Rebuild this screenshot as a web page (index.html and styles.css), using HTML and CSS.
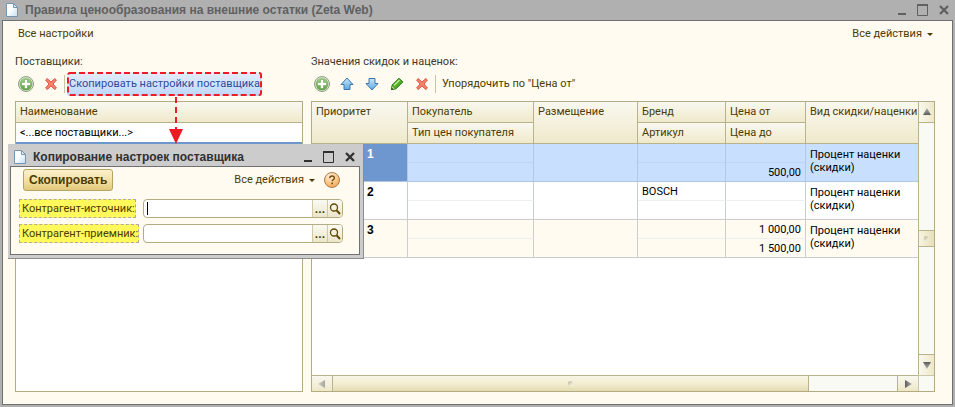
FILE: index.html
```html
<!DOCTYPE html>
<html lang="ru">
<head>
<meta charset="utf-8">
<title>Правила ценообразования на внешние остатки (Zeta Web)</title>
<link rel="stylesheet" href="styles.css">
</head>
<body>
<svg class="defs" aria-hidden="true">
  <defs>
    <linearGradient id="gGreen" x1="0" y1="0" x2="0" y2="1"><stop offset="0" stop-color="#a9cf96"/><stop offset="1" stop-color="#5da03f"/></linearGradient>
    <linearGradient id="gBlue" x1="0" y1="0" x2="0" y2="1"><stop offset="0" stop-color="#c5e6fb"/><stop offset="1" stop-color="#5fa9e0"/></linearGradient>
    <linearGradient id="gPage" x1="0" y1="0" x2="1" y2="1"><stop offset="0.4" stop-color="#ffffff"/><stop offset="1" stop-color="#c4def2"/></linearGradient>
    <radialGradient id="gHelp" cx="0.4" cy="0.25" r="0.8"><stop offset="0" stop-color="#fff1de"/><stop offset="0.55" stop-color="#fbc98c"/><stop offset="1" stop-color="#f2a04a"/></radialGradient>
    <linearGradient id="gGray" x1="0" y1="0" x2="1" y2="0"><stop offset="0" stop-color="#5c5c5c"/><stop offset="1" stop-color="#b4b4b4"/></linearGradient>
    <symbol id="page" viewBox="0 0 12 14"><path d="M.5.5h7l4 4v9H.5z" fill="url(#gPage)" stroke="#7195b3"/><path d="M7.5.5v4h4z" fill="#dcecf8" stroke="#7195b3" stroke-linejoin="round"/></symbol>
    <symbol id="add" viewBox="0 0 16 16"><circle cx="8" cy="8" r="7.5" fill="#dbe5d3" stroke="#8e9e84"/><circle cx="8" cy="8" r="6.3" fill="url(#gGreen)"/><path d="M6.5 3.5h3v3h3v3h-3v3h-3v-3h-3v-3h3z" fill="#fff" stroke="#5c9844" stroke-width=".5"/></symbol>
    <symbol id="del" viewBox="0 0 12 12"><path d="M2.2.6 6 4 9.800.6 11.400 2 8 6l3.400 4-1.600 1.500L6 8l-3.800 3.500L.6 10 4 6 .6 2z" fill="#f4826f" stroke="#dc5543" stroke-linejoin="round"/></symbol>
    <symbol id="up" viewBox="0 0 14 14"><path d="M7 1 13 7.500H10V12.500H4V7.500H1z" fill="url(#gBlue)" stroke="#3c77a6" stroke-linejoin="round"/></symbol>
    <symbol id="down" viewBox="0 0 14 14"><path d="M7 13 1 6.500H4V1.500H10V6.500H13z" fill="url(#gBlue)" stroke="#3c77a6" stroke-linejoin="round"/></symbol>
    <symbol id="pencil" viewBox="0 0 14 14"><path d="M1.500 12.500 2.200 8 9 1.200 12.800 5 6 11.800z" fill="#4fae24" stroke="#2a7412" stroke-linejoin="round"/><path d="m4 8.500 5.500-5.500" stroke="#c3ee9e" stroke-width="1.500"/><path d="M1.500 12.500 2.200 8.800 5.200 11.800z" fill="#f5eec8" stroke="#2f7d16" stroke-width=".6"/><path d="m1 13 .8-2.500 1.800 1.800z" fill="#1f4a10"/></symbol>
    <symbol id="min" viewBox="0 0 12 12"><path d="M2 9h8v2H2z" fill="currentColor"/></symbol>
    <symbol id="max" viewBox="0 0 12 12"><path d="M.5 1h10v10.500H.5z" fill="none" stroke="currentColor"/><path d="M0 0h11v2H0z" fill="currentColor"/></symbol>
    <symbol id="close" viewBox="0 0 12 12"><path d="m2 2 8 8M10 2l-8 8" stroke="currentColor" stroke-width="2.300"/></symbol>
    <symbol id="caret" viewBox="0 0 6 3"><path d="M0 0h6L3 3z" fill="#4d3b00"/></symbol>
    <symbol id="lens" viewBox="0 0 12 12"><circle cx="5" cy="4.500" r="3.500" fill="none" stroke="#5f4a00" stroke-width="1.300"/><path d="m7.500 7.200 3.500 3.800" stroke="#5f4a00" stroke-width="2"/></symbol>
    <symbol id="tri" viewBox="0 0 8 8"><path d="M1 0v8l7-4z" fill="url(#gGray)"/></symbol>
  </defs>
</svg>

<div class="window">
  <header class="titlebar">
    <svg class="page"><use href="#page"/></svg>
    <h1>Правила ценообразования на внешние остатки (Zeta Web)</h1>
    <div class="winbtns">
      <button aria-label="Свернуть"><svg><use href="#min"/></svg></button>
      <button aria-label="Развернуть"><svg><use href="#max"/></svg></button>
      <button aria-label="Закрыть"><svg><use href="#close"/></svg></button>
    </div>
  </header>

  <main class="client">
    <nav class="commands">
      <button class="link">Все настройки</button>
      <button class="link">Все действия <svg class="caret"><use href="#caret"/></svg></button>
    </nav>

    <div class="panes">
      <section class="suppliers">
        <h2>Поставщики:</h2>
        <div class="toolbar">
          <button class="tool" aria-label="Добавить"><svg class="i16"><use href="#add"/></svg></button>
          <button class="tool" aria-label="Удалить"><svg class="i12"><use href="#del"/></svg></button>
          <span class="sep"></span>
          <button class="copy">Скопировать настройки поставщика
            <svg class="frame"><rect x="1" y="1" rx="2"/></svg>
            <svg class="arrow" viewBox="0 0 14 48"><path d="M7 1v34" stroke="#ed1c24" stroke-width="2" stroke-dasharray="6 4"/><path d="M0 33h14L7 48z" fill="#ed1c24"/></svg>
          </button>
        </div>
        <div class="box">
          <table class="list">
            <thead><tr><th>Наименование</th></tr></thead>
            <tbody>
              <tr><td>&lt;...все поставщики...&gt;</td></tr>
              <tr class="current"><td></td></tr>
            </tbody>
          </table>
        </div>
      </section>

      <section class="values">
        <h2>Значения скидок и наценок:</h2>
        <div class="toolbar">
          <button class="tool" aria-label="Добавить"><svg class="i16"><use href="#add"/></svg></button>
          <button class="tool" aria-label="Вверх"><svg class="i14"><use href="#up"/></svg></button>
          <button class="tool" aria-label="Вниз"><svg class="i14"><use href="#down"/></svg></button>
          <button class="tool" aria-label="Изменить"><svg class="i14"><use href="#pencil"/></svg></button>
          <button class="tool" aria-label="Удалить"><svg class="i12"><use href="#del"/></svg></button>
          <span class="sep"></span>
          <button class="link sort">Упорядочить по "Цена от"</button>
        </div>
        <div class="box scroller">
          <table class="grid">
            <colgroup><col class="c1"><col class="c2"><col class="c3"><col class="c4"><col class="c5"><col class="c6"></colgroup>
            <thead>
              <tr><th rowspan="2">Приоритет</th><th>Покупатель</th><th rowspan="2">Размещение</th><th>Бренд</th><th>Цена от</th><th rowspan="2">Вид скидки/наценки</th></tr>
              <tr><th>Тип цен покупателя</th><th>Артикул</th><th>Цена до</th></tr>
            </thead>
            <tbody class="selected">
              <tr><td rowspan="2" class="prio">1</td><td class="top"></td><td rowspan="2"></td><td class="top"></td><td class="top num"></td><td rowspan="2" class="kind">Процент наценки (скидки)</td></tr>
              <tr><td></td><td></td><td class="num">500,00</td></tr>
            </tbody>
            <tbody>
              <tr><td rowspan="2" class="prio">2</td><td class="top"></td><td rowspan="2"></td><td class="top">BOSCH</td><td class="top num"></td><td rowspan="2" class="kind">Процент наценки (скидки)</td></tr>
              <tr><td></td><td></td><td class="num"></td></tr>
            </tbody>
            <tbody class="alt">
              <tr><td rowspan="2" class="prio">3</td><td class="top"></td><td rowspan="2"></td><td class="top"></td><td class="top num">1 000,00</td><td rowspan="2" class="kind">Процент наценки (скидки)</td></tr>
              <tr><td></td><td></td><td class="num">1 500,00</td></tr>
            </tbody>
          </table>
          <div class="vbar">
            <button class="vbtn first" aria-label="Прокрутить вверх"><svg class="tri n"><use href="#tri"/></svg></button>
            <div class="track before"></div>
            <div class="vthumb"><i></i></div>
            <div class="track after"></div>
            <button class="vbtn last" aria-label="Прокрутить вниз"><svg class="tri s"><use href="#tri"/></svg></button>
          </div>
          <div class="hbar">
            <button class="hbtn first" aria-label="Прокрутить влево"><svg class="tri w"><use href="#tri"/></svg></button>
            <div class="hthumb"><i></i></div>
            <div class="htrack"></div>
            <button class="hbtn last" aria-label="Прокрутить вправо"><svg class="tri"><use href="#tri"/></svg></button>
          </div>
          <div class="corner"></div>
        </div>
      </section>
    </div>
  </main>
</div>

<div class="dialog" role="dialog" aria-labelledby="dlg">
  <header class="dlgbar">
    <svg class="page"><use href="#page"/></svg>
    <h2 id="dlg">Копирование настроек поставщика</h2>
    <div class="winbtns">
      <button aria-label="Свернуть"><svg><use href="#min"/></svg></button>
      <button aria-label="Развернуть"><svg><use href="#max"/></svg></button>
      <button aria-label="Закрыть"><svg><use href="#close"/></svg></button>
    </div>
  </header>
  <form class="dlgbody">
    <div class="actions">
      <button type="button" class="primary">Скопировать</button>
      <button type="button" class="link more">Все действия <svg class="caret"><use href="#caret"/></svg></button>
      <button type="button" class="help" aria-label="Справка"><svg class="i16" viewBox="0 0 16 16"><circle cx="8" cy="8" r="7.500" fill="url(#gHelp)" stroke="#a98055"/><path d="M5.700 6.200c0-3 4.700-2.900 4.700-.3 0 1.700-2.200 1.700-2.200 3.400" fill="none" stroke="#7a4a12" stroke-width="1.400"/><path d="M7.400 10.600h1.600v1.600H7.400z" fill="#7a4a12"/></svg></button>
    </div>
    <div class="field">
      <label for="src">Контрагент-источник:</label>
      <div class="combo"><input id="src" type="text" autofocus><span class="cursor"></span><button type="button" aria-label="Выбрать">...</button><button type="button" aria-label="Открыть"><svg class="i12"><use href="#lens"/></svg></button></div>
    </div>
    <div class="field">
      <label for="dst">Контрагент-приемник:</label>
      <div class="combo"><input id="dst" type="text"><button type="button" aria-label="Выбрать">...</button><button type="button" aria-label="Открыть"><svg class="i12"><use href="#lens"/></svg></button></div>
    </div>
  </form>
</div>
</body>
</html>
```

FILE: styles.css
```css
* { box-sizing: border-box; }
body {
  margin: 0;
  font: 11px/14px Roboto, "Liberation Sans", sans-serif;
  color: #4d3b00;
  background: #b0b0b0;
}
h1, h2 { margin: 0; font: inherit; }
button {
  margin: 0;
  padding: 0;
  border: 0;
  background: none;
  font: inherit;
  color: inherit;
  white-space: nowrap;
}
svg { display: block; flex: none; }
.defs { position: absolute; width: 0; height: 0; }
.i12 { width: 12px; height: 12px; }
.i14 { width: 14px; height: 14px; }
.i16 { width: 16px; height: 16px; }

.titlebar h1, .dlgbar h2, .prio, .primary {
  font: bold 12px/14px "Liberation Sans", Arial, sans-serif;
}

.window {
  display: flex;
  flex-direction: column;
  min-height: 100vh;
  padding: 0 2px 2px;
}
.titlebar {
  display: flex;
  align-items: center;
  gap: 7px;
  height: 20px;
  padding: 0 3px 0 4px;
  color: #606060;
}
.page { width: 12px; height: 14px; }
.titlebar h1, .dlgbar h2 { flex: 1; white-space: nowrap; }
.winbtns { display: flex; gap: 9px; }
.winbtns svg { width: 12px; height: 12px; }

.client {
  flex: 1;
  display: flex;
  flex-direction: column;
  padding: 5px 17px 12px 12px;
  border: 1px solid #707070;
  background: #fffbf0;
}
.commands {
  display: flex;
  justify-content: space-between;
  padding: 0 2px 0 3px;
  margin-bottom: 13px;
}
.link { display: flex; align-items: center; gap: 5px; height: 16px; }
.caret { width: 6px; height: 3px; }

.panes { flex: 1; display: flex; gap: 8px; }
.suppliers, .values { display: flex; flex-direction: column; min-width: 0; }
.suppliers { flex: 288 1 0; }
.values { flex: 624 1 0; }
.panes h2 { height: 14px; color: #40382a; }
.toolbar {
  display: flex;
  align-items: center;
  height: 24px;
  margin: 3px 0 5px;
  padding-left: 3px;
}
.tool { display: flex; align-items: center; justify-content: center; width: 16px; height: 20px; margin-right: 9px; }
.tool:has(+ .sep) { margin-right: 5px; }
.sep { width: 1px; height: 18px; background: #c9c3a5; }
.sort { margin-left: 6px; }
.copy {
  position: relative;
  height: 24px;
  margin-left: 2px;
  padding: 0 2px;
  border-radius: 3px;
  background: linear-gradient(#e4eefc, #bdd7fb);
  color: #2f4b9b;
}
.frame { position: absolute; left: 0; top: 0; width: 100%; height: 100%; overflow: visible; }
.frame rect {
  width: calc(100% - 2px);
  height: calc(100% - 2px);
  fill: none;
  stroke: #ed1c24;
  stroke-width: 2px;
  stroke-dasharray: 6 3;
}
.arrow { position: absolute; z-index: 1; left: 102px; top: 24px; width: 14px; height: 48px; }

.box { flex: 1; border: 1px solid #b3ac83; background: #fff; }
table { width: 100%; border-collapse: separate; border-spacing: 0; table-layout: fixed; }
th {
  height: 21px;
  padding: 3px 4px 2px;
  border-bottom: 1px solid #b9b28a;
  background: linear-gradient(#f9f8f0, #efe9cb);
  font-weight: normal;
  text-align: left;
  vertical-align: top;
  white-space: nowrap;
}
td { padding: 0 4px; color: #000; }
.list td { height: 19px; }
.list .current td { background: #6f97cf; }

.scroller { display: grid; grid-template: 1fr 16px / 1fr 16px; }
.grid { align-self: start; }
.c1 { width: 96px; }
.c2 { width: 126px; }
.c3 { width: 104px; }
.c4 { width: 88px; }
.c5 { width: 80px; }
.grid th { border-right: 1px solid #b9b28a; }
.grid th:last-child { border-right: 0; }
.grid tr + tr th:last-child { border-right: 1px solid #b9b28a; }
.grid td {
  height: 19px;
  border-right: 1px solid #c8cdd0;
  border-bottom: 1px solid #c8cdd0;
  vertical-align: top;
  padding-top: 3px;
}
.grid td.top { border-bottom-color: #eceef0; }
.grid td.kind { border-right: 0; line-height: 13px; padding-top: 4px; }
.grid .prio { padding-left: 55px; }
.grid .num { text-align: right; }
.alt td { background: #fffbf0; }
.grid .selected td { background: #c8e0fe; border-color: #b0c8e6; }
.grid .selected td.top { border-bottom-color: #bcd5f2; }
.grid .selected .prio { background: #6f97cf; color: #fff; }

.vbar { display: flex; flex-direction: column; border-left: 1px solid #b9b28a; background: #fafaf5; }
.vbtn { display: flex; align-items: center; justify-content: center; height: 21px; background: linear-gradient(90deg, #f9f8f0, #eee8c8); }
.vbtn.first { border-bottom: 1px solid #b9b28a; }
.vbtn.last { border-top: 1px solid #b9b28a; }
.track.before { flex: 107; }
.track.after { flex: 107; }
.vthumb, .hthumb { display: flex; align-items: center; justify-content: center; }
.vthumb { height: 17px; border: solid #b9b28a; border-width: 1px 0; background: linear-gradient(90deg, #f7f4e2, #e8e0b8); }
.vthumb i, .hthumb i { width: 5px; height: 5px; border-radius: 50%; background: linear-gradient(135deg, #b9b391, #fffdf0); }
.tri { width: 8px; height: 8px; }
.tri.n { transform: rotate(-90deg); }
.tri.s { transform: rotate(90deg); }
.tri.w { transform: rotate(180deg); opacity: .5; }
.hbar { display: flex; border-top: 1px solid #b9b28a; background: #fafaf5; }
.hbtn { display: flex; align-items: center; justify-content: center; width: 21px; background: linear-gradient(#f9f8f0, #eee8c8); }
.hbtn.first { border-right: 1px solid #b9b28a; }
.hbtn.last { border-left: 1px solid #b9b28a; }
.hthumb { flex: 476; border-right: 1px solid #b9b28a; background: linear-gradient(#f8f5e6, #f1ebcc 60%, #e2daaf); }
.htrack { flex: 88; }
.corner { border: solid #ccc7a6; border-width: 1px 0 0 1px; background: #fafaf5; }

.dialog {
  position: absolute;
  left: 8px;
  top: 144px;
  width: 356px;
  padding: 1px 3px 3px 2px;
  border: solid #8c8c8c;
  border-width: 0 1px 1px 0;
  background: #cccccc;
}
.dlgbar {
  display: flex;
  align-items: center;
  gap: 7px;
  height: 21px;
  padding: 2px 4px 0;
  color: #303030;
}
.dlgbody {
  padding: 2px 16px 11px 8px;
  border: 1px solid #707070;
  background: #fffbf0;
}
.actions { display: flex; align-items: center; margin-bottom: 8px; padding: 0 3px 0 4px; }
.primary {
  height: 22px;
  padding: 0 5px;
  border: 1px solid #b7a463;
  border-radius: 3px;
  background: linear-gradient(#fbf1cf, #f1dd9e 60%, #e2c87c);
}
.more { margin-left: auto; }
.help { margin-left: 9px; }
.field { display: flex; align-items: center; justify-content: space-between; height: 19px; }
.field + .field { margin-top: 6px; }
.field label {
  height: 19px;
  padding: 2px 0 2px 2px;
  border: 1px dashed #b3a9a0;
  background: #fff95c;
  white-space: nowrap;
}
.combo {
  position: relative;
  display: flex;
  width: 200px;
  height: 19px;
  border: 1px solid #b3ac83;
  border-radius: 4px;
  background: #fff;
  overflow: hidden;
}
.combo input { flex: 1; min-width: 0; padding: 0 4px; border: 0; outline: 0; background: none; font: inherit; caret-color: transparent; }
.cursor { position: absolute; left: 3px; top: 2px; width: 1px; height: 13px; background: #000; }
.combo button {
  display: flex;
  align-items: center;
  justify-content: center;
  width: 15px;
  border-left: 1px solid #cfc9a8;
  background: linear-gradient(#fafaf2, #ece6c8);
  font-size: 12px;
  font-weight: bold;
}
```
